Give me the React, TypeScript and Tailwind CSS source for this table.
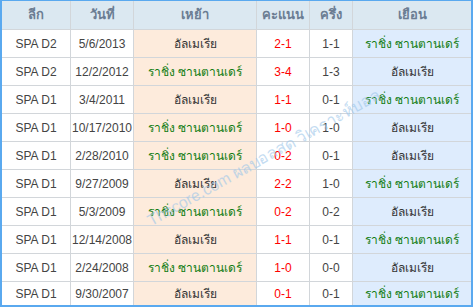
const HOME = 'อัลเมเรีย'
const RACING = 'ราชิ่ง ซานตานเดร์'

interface Match {
  league: string
  date: string
  home: string
  score: string
  half: string
  away: string
}

const MATCHES: Match[] = [
  { league: 'SPA D2', date: '5/6/2013', home: HOME, score: '2-1', half: '1-1', away: RACING },
  { league: 'SPA D2', date: '12/2/2012', home: RACING, score: '3-4', half: '1-3', away: HOME },
  { league: 'SPA D1', date: '3/4/2011', home: HOME, score: '1-1', half: '0-1', away: RACING },
  { league: 'SPA D1', date: '10/17/2010', home: RACING, score: '1-0', half: '1-0', away: HOME },
  { league: 'SPA D1', date: '2/28/2010', home: RACING, score: '0-2', half: '0-1', away: HOME },
  { league: 'SPA D1', date: '9/27/2009', home: HOME, score: '2-2', half: '1-0', away: RACING },
  { league: 'SPA D1', date: '5/3/2009', home: RACING, score: '0-2', half: '0-2', away: HOME },
  { league: 'SPA D1', date: '12/14/2008', home: HOME, score: '1-1', half: '0-1', away: RACING },
  { league: 'SPA D1', date: '2/24/2008', home: RACING, score: '1-0', half: '0-0', away: HOME },
  { league: 'SPA D1', date: '9/30/2007', home: HOME, score: '0-1', half: '0-1', away: RACING },
]

const HEADERS = ['ลีก', 'วันที่', 'เหย้า', 'คะแนน', 'ครึ่ง', 'เยือน']

function teamClass(name: string) {
  return name === RACING ? 'text-[#127d12]' : 'text-[#333]'
}

export default function App() {
  return (
    <div className="w-[473px] h-[307px] bg-white font-['Liberation_Sans',Tahoma,sans-serif] text-[12px]">
      <div className="relative overflow-hidden border-[#5aa9ef] border-t border-l-2 border-r-2 border-b-2">
        <div className="grid grid-cols-[68px_62px_122px_52px_42px_118px] gap-px bg-[#d2d6da]">
          {HEADERS.map((h) => (
            <div
              key={h}
              className="h-[28px] flex items-center justify-center bg-[#dbe8f1] text-[13px] font-bold text-[#6b7d93]"
            >
              {h}
            </div>
          ))}
          {MATCHES.map((m, i) => {
            const h = i === MATCHES.length - 1 ? 'h-[23px]' : 'h-[27px]'
            return <Row key={m.date} match={m} heightClass={h} />
          })}
        </div>
        {/* watermark */}
        <div className="pointer-events-none absolute left-[262px] top-[157px] -translate-x-1/2 -translate-y-1/2 -rotate-[29deg] whitespace-nowrap text-[16px] text-[#9cc6ea] opacity-60">
          Thscore.com ผลบอลสด วิเคราะห์บอล
        </div>
      </div>
    </div>
  )
}

function Row({ match, heightClass }: { match: Match; heightClass: string }) {
  const cell = `${heightClass} flex items-center justify-center`
  return (
    <>
      <div className={`${cell} bg-white text-[#444]`}>{match.league}</div>
      <div className={`${cell} bg-white text-[#444]`}>{match.date}</div>
      <div className={`${cell} bg-[#fdebdc] ${teamClass(match.home)}`}>{match.home}</div>
      <div className={`${cell} bg-white text-[#f00]`}>{match.score}</div>
      <div className={`${cell} bg-white text-[#444]`}>{match.half}</div>
      <div className={`${cell} bg-[#deecfd] ${teamClass(match.away)}`}>{match.away}</div>
    </>
  )
}
